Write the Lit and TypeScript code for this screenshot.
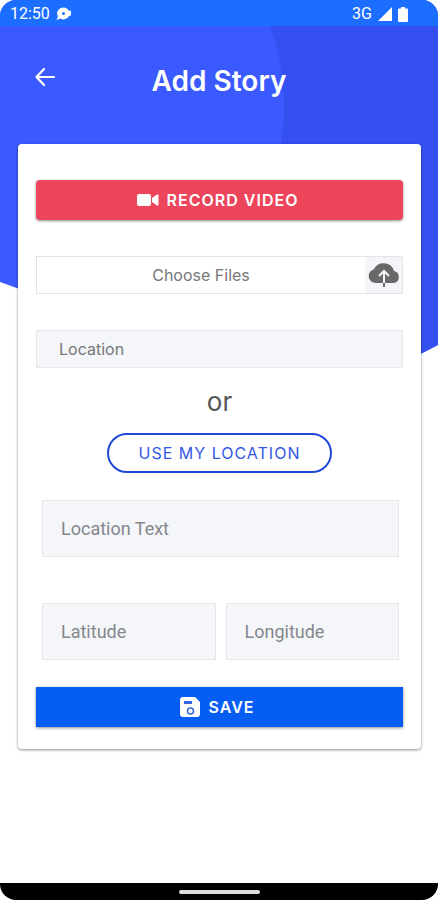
import { LitElement, html, css } from "lit";
import { customElement } from "lit/decorators.js";

@customElement("app-root")
export class AppRoot extends LitElement {
  static styles = css`
    :host {
      display: block;
      background: #fff;
      font-family: Inter, "Liberation Sans", sans-serif;
      color: #555;
    }
    * {
      box-sizing: border-box;
    }
    .screen {
      position: relative;
      isolation: isolate;
      display: flex;
      flex-direction: column;
      min-height: 100vh;
      border-radius: 16px;
      overflow: hidden;
    }
    .backdrop {
      position: absolute;
      z-index: -1;
      top: 0;
      left: 0;
      width: 100%;
      height: 400px;
    }
    .status {
      display: flex;
      align-items: center;
      justify-content: space-between;
      height: 26px;
      padding: 2px 30px 0 10px;
      background: #1b6eff;
      color: #fff;
      font: 16px/24px Roboto, sans-serif;
    }
    .status svg,
    .icon {
      display: block;
      flex: none;
    }
    .status-group {
      display: flex;
      align-items: center;
      gap: 6px;
    }
    header {
      display: grid;
      grid-template-columns: 24px 1fr 24px;
      align-items: center;
      height: 118px;
      padding: 0 32px 8px;
      color: #fff;
    }
    h1 {
      margin: 0;
      font-size: 28px;
      line-height: 36px;
      font-weight: 600;
      text-align: center;
    }
    button {
      border: 0;
      cursor: pointer;
      font-family: inherit;
    }
    .back {
      width: 24px;
      height: 24px;
      margin-bottom: 8px;
      padding: 0;
      background: none;
      color: #fff;
    }
    .card {
      display: flex;
      flex-direction: column;
      margin: 0 17px 0 18px;
      padding: 36px 18px 22px;
      border-radius: 4px;
      background: #fff;
      box-shadow: 0 1px 3px rgba(0, 0, 0, 0.45);
    }
    .action {
      display: flex;
      align-items: center;
      justify-content: center;
      gap: 8px;
      height: 40px;
      padding: 0 4px 0 0;
      color: #fff;
      font-size: 16px;
      line-height: 24px;
      font-weight: 600;
      letter-spacing: 1px;
      box-shadow: 0 1px 3px rgba(0, 0, 0, 0.45);
    }
    .record {
      border-radius: 4px;
      background: #ed455c;
    }
    .save {
      margin-top: 27px;
      background: #065df4;
    }
    .files {
      display: flex;
      height: 38px;
      margin-top: 36px;
      border: 1px solid #e3e4e6;
      color: #777;
      font-size: 16px;
      cursor: pointer;
    }
    .files-text {
      flex: 1;
      line-height: 36px;
      text-align: center;
    }
    .files-icon {
      display: flex;
      align-items: center;
      justify-content: center;
      width: 37px;
      background: #f4f5f8;
    }
    .hidden {
      position: absolute;
      width: 1px;
      height: 1px;
      overflow: hidden;
      clip-path: inset(50%);
    }
    .field {
      display: block;
      width: 100%;
      min-width: 0;
      height: 57px;
      padding: 0 18px;
      border: 1px solid #e6e7e9;
      border-radius: 0;
      background: #f4f6fa;
      color: #444;
      font: 18px/24px Roboto, sans-serif;
    }
    .field::placeholder {
      color: #85878b;
      opacity: 1;
    }
    .search {
      height: 38px;
      margin-top: 36px;
      padding: 0 22px;
      font: 16px/24px Inter, sans-serif;
    }
    .search::placeholder {
      color: #777;
    }
    .or {
      margin: 16px 0 13px;
      font-size: 26px;
      line-height: 36px;
      text-align: center;
    }
    .locate {
      align-self: center;
      height: 40px;
      padding: 0 30px;
      border: 2px solid #2149d8;
      border-radius: 20px;
      background: #fff;
      color: #3558e6;
      font-size: 16px;
      line-height: 24px;
      letter-spacing: 1px;
    }
    .coords {
      display: grid;
      grid-template-columns: 1fr 1fr;
      gap: 46px 10px;
      margin: 27px 4px 0 6px;
    }
    .wide {
      grid-column: 1 / -1;
    }
    .nav {
      display: flex;
      align-items: center;
      justify-content: center;
      height: 17px;
      margin-top: auto;
      background: #000;
    }
    .handle {
      width: 81px;
      height: 4px;
      border-radius: 2px;
      background: #dedede;
    }
  `;

  render() {
    return html`
      <div class="screen">
        <svg class="backdrop" viewBox="0 0 438 400" preserveAspectRatio="none" aria-hidden="true">
          <path fill="#3a5aff" d="M0 0H438V345L360 385Q330 397 296 388L0 282Z" />
          <path fill="#3450f1" d="M260 0Q296 80 278 160L240 300V371L296 388Q330 397 360 385L438 345V0Z" />
        </svg>

        <div class="status">
          <div class="status-group">
            <span>12:50</span>
            <svg width="16" height="14" viewBox="0 0 16 14" fill="#fff" aria-hidden="true">
              <path fill-rule="evenodd" d="M7.500 0.500A6 6 0 0 1 13 4L15 3.500V8.500L13 9A6 6 0 0 1 4.500 11.500L.5 13L2 9.500A6 6 0 0 1 7.500.5ZM7.500 5A1.500 1.500 0 1 0 7.500 8A1.500 1.500 0 1 0 7.500 5Z" />
            </svg>
          </div>
          <div class="status-group">
            <span>3G</span>
            <svg width="14" height="14" viewBox="0 0 14 14" fill="#fff" aria-hidden="true"><path d="M14 0V14H0Z" /></svg>
            <svg width="10" height="15" viewBox="0 0 10 15" fill="#fff" aria-hidden="true">
              <path d="M3 0H7V1.500H9Q10 1.500 10 2.500V14Q10 15 9 15H1Q0 15 0 14V2.500Q0 1.500 1 1.500H3Z" />
            </svg>
          </div>
        </div>

        <header>
          <button class="back" aria-label="Back">
            <svg class="icon" width="24" height="24" viewBox="0 0 24 24" fill="none" stroke="currentColor" stroke-width="2.200" stroke-linecap="round" stroke-linejoin="round" aria-hidden="true">
              <path d="M22 12H4.500M12 4L4.500 12L12 20" />
            </svg>
          </button>
          <h1>Add Story</h1>
        </header>

        <form class="card" @submit=${(e: Event) => e.preventDefault()}>
          <button type="button" class="action record">
            <svg class="icon" width="22" height="14" viewBox="0 0 22 14" fill="#fff" aria-hidden="true">
              <rect y="1" width="14" height="12" rx="2" />
              <path d="M15 5L20 1.500Q21.500 1 21.500 2.500V11.500Q21.500 13 20 12.500L15 9Z" />
            </svg>
            RECORD VIDEO
          </button>

          <label class="files">
            <input class="hidden" type="file" multiple />
            <span class="files-text">Choose Files</span>
            <span class="files-icon">
              <svg class="icon" width="32" height="26" viewBox="0 0 32 26" aria-hidden="true">
                <path fill="#686868" d="M7.500 21A7 7 0 0 1 6 7.200A10.800 10.800 0 0 1 26 9A6.100 6.100 0 0 1 25.500 21Z" />
                <path fill="none" stroke="#f4f5f8" stroke-width="2" d="M16 21V9M11 14L16 9L21 14" />
                <path stroke="#686868" stroke-width="2" d="M16 21V25" />
              </svg>
            </span>
          </label>

          <input class="field search" type="text" placeholder="Location" aria-label="Location" />
          <p class="or">or</p>
          <button type="button" class="locate">USE MY LOCATION</button>

          <div class="coords">
            <input class="field wide" type="text" placeholder="Location Text" aria-label="Location Text" />
            <input class="field" type="text" placeholder="Latitude" aria-label="Latitude" />
            <input class="field" type="text" placeholder="Longitude" aria-label="Longitude" />
          </div>

          <button type="submit" class="action save">
            <svg class="icon" width="20" height="20" viewBox="0 0 20 20" aria-hidden="true">
              <path fill="#fff" d="M3 0H15L20 5V17Q20 20 17 20H3Q0 20 0 17V3Q0 0 3 0Z" />
              <path stroke="#3567df" stroke-width="3" d="M4 5.500H12" />
              <circle cx="10.500" cy="14" r="3" fill="none" stroke="#3567df" stroke-width="1.500" />
            </svg>
            SAVE
          </button>
        </form>

        <div class="nav"><div class="handle"></div></div>
      </div>
    `;
  }
}
